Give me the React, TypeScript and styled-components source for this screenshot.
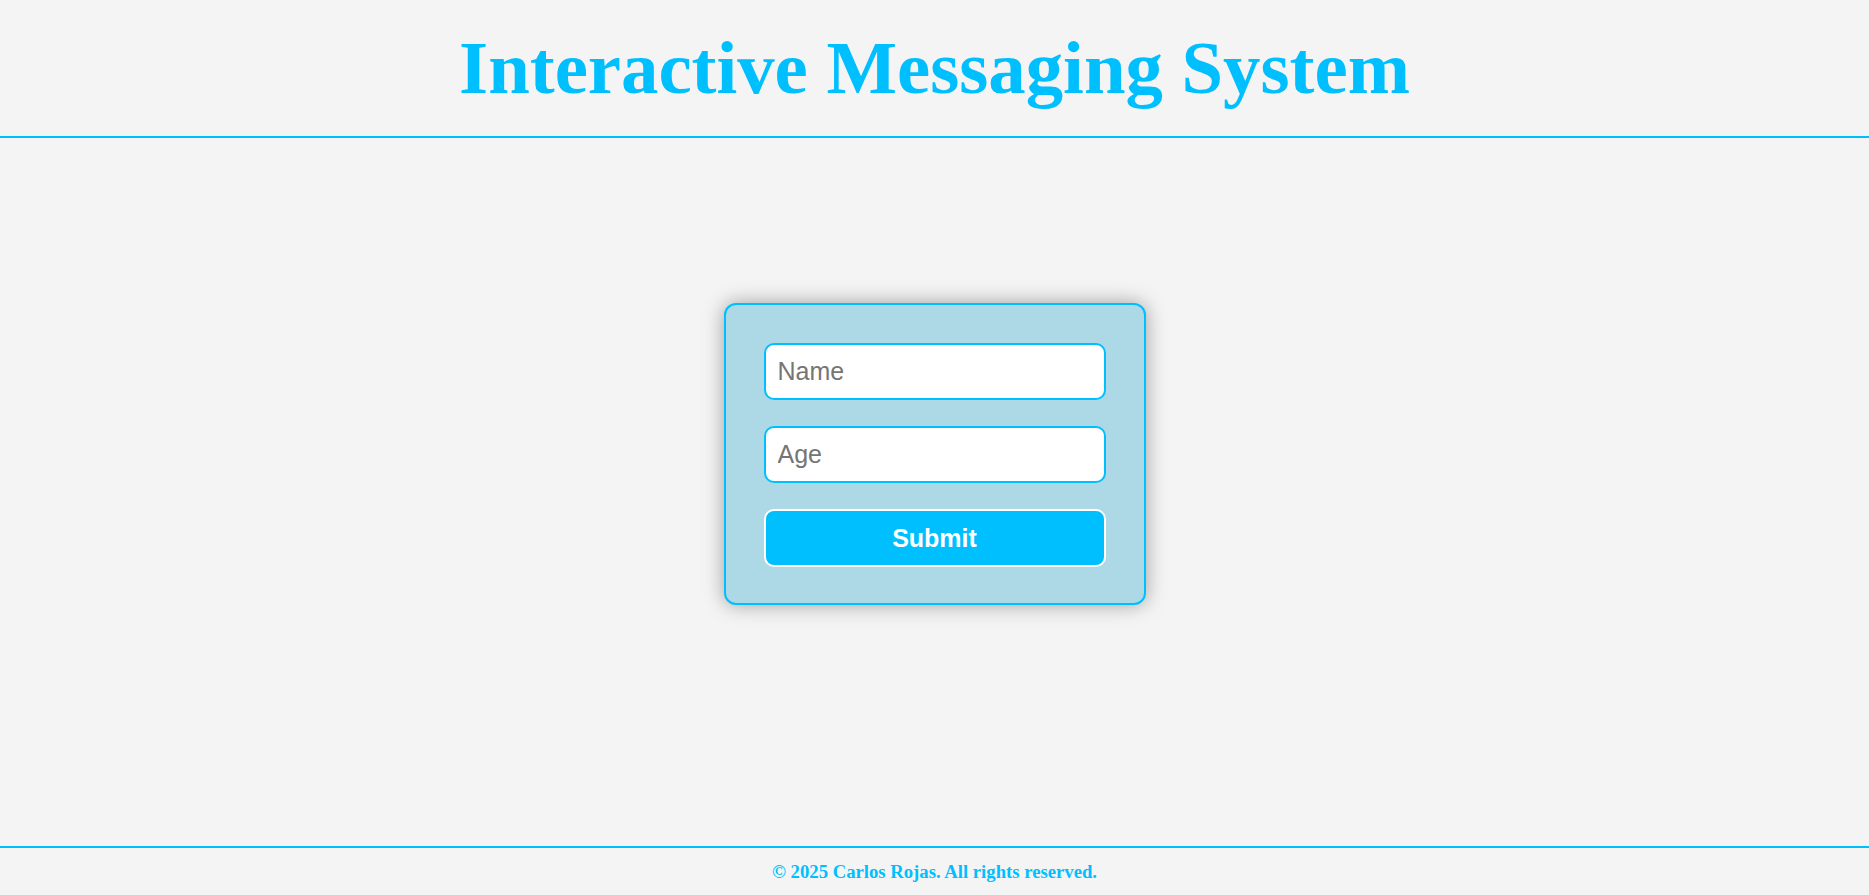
import React from "react";
import styled, { createGlobalStyle } from "styled-components";

const GlobalStyle = createGlobalStyle`
  html, body {
    margin: 0;
    padding: 0;
    background: #f4f4f4;
  }
  body {
    font-family: "Liberation Serif", "Times New Roman", serif;
  }
  * { box-sizing: border-box; }
`;

const Page = styled.div`
  min-height: 100vh;
  display: flex;
  flex-direction: column;
  background: #f4f4f4;
`;

const Header = styled.header`
  padding: 25px 0;
  border-bottom: 2px solid #00bfff;
  text-align: center;
`;

const Title = styled.h1`
  margin: 0;
  font-family: "Liberation Serif", "Times New Roman", serif;
  font-weight: bold;
  font-size: 4vw;
  color: #00bfff;
`;

const Main = styled.main`
  flex: 1;
  display: flex;
  align-items: center;
  justify-content: center;
  padding-bottom: 76px;
`;

const Card = styled.form`
  width: 422px;
  padding: 38px 38px 36px;
  background: #add8e6;
  border: 2px solid #00bfff;
  border-radius: 12px;
  box-shadow: 0 0 20px rgba(0, 0, 0, 0.35);
  display: flex;
  flex-direction: column;
  gap: 26px;
`;

const Field = styled.input`
  width: 100%;
  height: 57px;
  padding: 12px;
  font-family: "Liberation Sans", Arial, sans-serif;
  font-size: 25px;
  color: #333;
  background: #fff;
  border: 2px solid #00bfff;
  border-radius: 10px;
  outline: none;
  &::placeholder {
    color: #757575;
  }
`;

const SubmitButton = styled.button`
  width: 100%;
  height: 58px;
  font-family: "Liberation Sans", Arial, sans-serif;
  font-size: 25px;
  font-weight: bold;
  color: #fff;
  background: #00bfff;
  border: 2px solid #fff;
  border-radius: 10px;
  cursor: pointer;
`;

const Footer = styled.footer`
  padding: 13px 0 12px;
  border-top: 2px solid #00bfff;
  text-align: center;
  font-family: "Liberation Serif", "Times New Roman", serif;
  font-weight: bold;
  font-size: 1vw;
  color: #00bfff;
`;

export default function App() {
  return (
    <>
      <GlobalStyle />
      <Page>
        <Header>
          <Title>Interactive Messaging System</Title>
        </Header>
        <Main>
          <Card onSubmit={(e) => e.preventDefault()}>
            <Field type="text" placeholder="Name" />
            <Field type="number" placeholder="Age" />
            <SubmitButton type="submit">Submit</SubmitButton>
          </Card>
        </Main>
        <Footer>© 2025 Carlos Rojas. All rights reserved.</Footer>
      </Page>
    </>
  );
}
